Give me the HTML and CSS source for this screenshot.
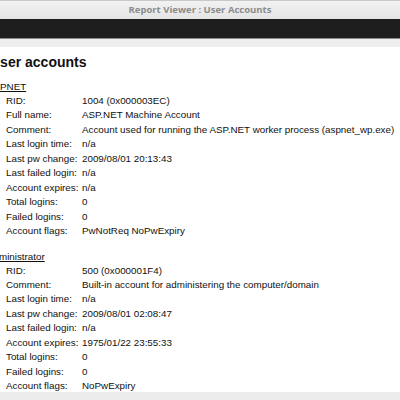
FILE: index.html
```html
<!DOCTYPE html>
<html>
<head>
    <title>Report Viewer : User Accounts</title>
    <link rel="stylesheet" href="styles.css">
</head>
<body>
    <div class="window">
        <div class="titlebar">Report Viewer : User Accounts</div>
        <div class="toolbar"></div>
        <div class="strip"></div>
        <div class="viewport">
            <div class="report">
                <h1>User accounts</h1>

                <div class="account">
                    <div class="account-name">ASPNET</div>
                    <div class="fields">
                        <span>RID:</span><span>1004 (0x000003EC)</span>
                        <span>Full name:</span><span>ASP.NET Machine Account</span>
                        <span>Comment:</span><span>Account used for running the ASP.NET worker process (aspnet_wp.exe)</span>
                        <span>Last login time:</span><span>n/a</span>
                        <span>Last pw change:</span><span>2009/08/01 20:13:43</span>
                        <span>Last failed login:</span><span>n/a</span>
                        <span>Account expires:</span><span>n/a</span>
                        <span>Total logins:</span><span>0</span>
                        <span>Failed logins:</span><span>0</span>
                        <span>Account flags:</span><span>PwNotReq NoPwExpiry</span>
                    </div>
                </div>

                <div class="account">
                    <div class="account-name">Administrator</div>
                    <div class="fields">
                        <span>RID:</span><span>500 (0x000001F4)</span>
                        <span>Comment:</span><span>Built-in account for administering the computer/domain</span>
                        <span>Last login time:</span><span>n/a</span>
                        <span>Last pw change:</span><span>2009/08/01 02:08:47</span>
                        <span>Last failed login:</span><span>n/a</span>
                        <span>Account expires:</span><span>1975/01/22 23:55:33</span>
                        <span>Total logins:</span><span>0</span>
                        <span>Failed logins:</span><span>0</span>
                        <span>Account flags:</span><span>NoPwExpiry</span>
                    </div>
                </div>
            </div>
        </div>
        <div class="statusbar"></div>
    </div>
</body>
</html>
```

FILE: styles.css
```css
html,
body {
    margin: 0;
    height: 100%;
    overflow: hidden;
}

.window {
    display: flex;
    flex-direction: column;
    height: 100%;
    background-color: #fff;
}

.titlebar {
    height: 19px;
    box-sizing: border-box;
    border-top: 1px solid #c8c8c8;
    background: linear-gradient(#f2f2f2, #e4e4e4);
    color: #8c8c8c;
    font-family: "Open Sans", sans-serif;
    font-weight: bold;
    font-size: 9.5px;
    line-height: 18px;
    text-align: center;
}

.toolbar {
    height: 19px;
    background-color: #1e1e1e;
    border-bottom: 1px solid #8a8a8a;
}

.strip {
    height: 8px;
    background-color: #efefef;
}

.viewport {
    flex: 1;
    overflow: hidden;
}

.report {
    margin-left: -11px;
    font-family: "Liberation Sans", Arial, sans-serif;
    font-size: 9.8px;
    color: #111;
}

.report h1 {
    margin: 7px 0 0 1px;
    font-size: 14px;
    line-height: 16px;
}

.account {
    margin-top: 10px;
}

.account + .account {
    margin-top: 11px;
}

.account-name {
    margin-left: -2px;
    line-height: 14px;
    text-decoration: underline;
}

.fields {
    display: grid;
    grid-template-columns: 76px auto;
    padding-left: 17px;
    line-height: 14.45px;
    white-space: nowrap;
}

.statusbar {
    height: 8px;
    background-color: #ececec;
}
```
